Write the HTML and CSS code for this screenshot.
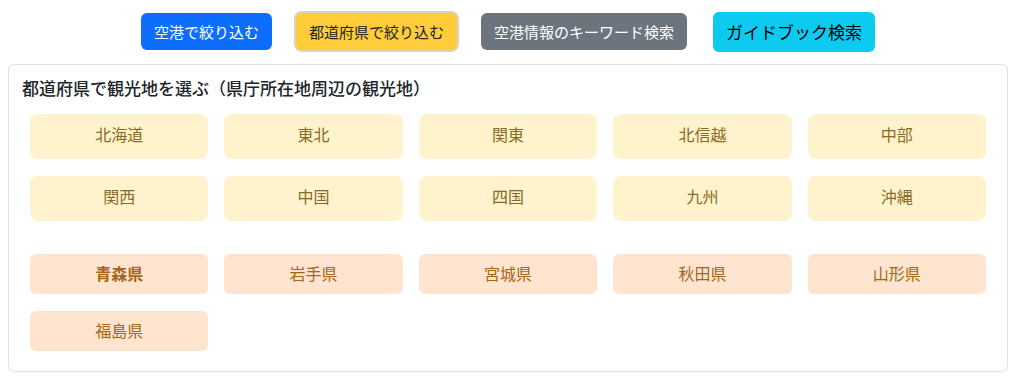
FILE: index.html
```html
<!DOCTYPE html>
<html lang="ja">
<head>
<meta charset="utf-8">
<title>観光地を選ぶ</title>
<link rel="stylesheet" href="styles.css">
</head>
<body>
<div class="page">
  <div class="toolbar">
    <button class="btn btn-blue">空港で絞り込む</button>
    <button class="btn btn-yellow">都道府県で絞り込む</button>
    <button class="btn btn-gray">空港情報のキーワード検索</button>
    <button class="btn btn-cyan">ガイドブック検索</button>
  </div>
  <div class="card">
    <div class="card-title">都道府県で観光地を選ぶ（県庁所在地周辺の観光地）</div>
    <div class="grid regions">
      <div class="tile region">北海道</div>
      <div class="tile region">東北</div>
      <div class="tile region">関東</div>
      <div class="tile region">北信越</div>
      <div class="tile region">中部</div>
      <div class="tile region">関西</div>
      <div class="tile region">中国</div>
      <div class="tile region">四国</div>
      <div class="tile region">九州</div>
      <div class="tile region">沖縄</div>
    </div>
    <div class="grid prefs">
      <div class="tile pref active">青森県</div>
      <div class="tile pref">岩手県</div>
      <div class="tile pref">宮城県</div>
      <div class="tile pref">秋田県</div>
      <div class="tile pref">山形県</div>
      <div class="tile pref">福島県</div>
    </div>
  </div>
</div>
</body>
</html>
```
FILE: styles.css
```css
* { box-sizing: border-box; }
html, body { margin: 0; padding: 0; background: #fff; }
body {
  font-family: "Noto Sans CJK JP", "Noto Sans", sans-serif;
  color: #212529;
}
.page {
  width: 1000px;
  margin-left: 8px;
}
.toolbar {
  display: flex;
  justify-content: center;
  align-items: center;
  gap: 24px;
  padding-top: 12px;
  height: 51px;
}
.btn {
  font-family: inherit;
  font-size: 15px;
  line-height: 20px;
  border: none;
  border-radius: 6px;
  height: 37px;
  padding: 0 13px;
  cursor: pointer;
}
.btn-blue { background: #0d6efd; color: #fff; }
.btn-yellow {
  background: #ffcd39;
  color: #212529;
  box-shadow: 0 0 0 2px rgba(190, 175, 130, 0.55);
}
.btn-gray { background: #6c757d; color: #fff; }
.btn-cyan {
  background: #0dcaf0;
  color: #000;
  font-size: 17px;
  height: 40px;
  margin-left: 2px;
}
.card {
  margin-top: 13px;
  border: 1px solid #dfe2e6;
  border-radius: 6px;
  padding: 11px 13px 20px;
}
.card-title {
  font-size: 17px;
  line-height: 24px;
  font-weight: 500;
  color: #212529;
}
.grid {
  display: grid;
  grid-template-columns: repeat(5, 1fr);
  column-gap: 16px;
  row-gap: 17px;
  padding: 0 8px;
}
.regions { margin-top: 14px; }
.prefs { margin-top: 33px; }
.tile {
  display: flex;
  align-items: center;
  justify-content: center;
  font-size: 16px;
  border-radius: 8px;
}
.region {
  height: 45px;
  padding-bottom: 5px;
  background: #fff3cd;
  color: #8a6a24;
}
.pref {
  height: 40px;
  padding-bottom: 2px;
  background: #ffe5d0;
  color: #a5651a;
  border-radius: 6px;
}
.pref.active { font-weight: 700; }
```
